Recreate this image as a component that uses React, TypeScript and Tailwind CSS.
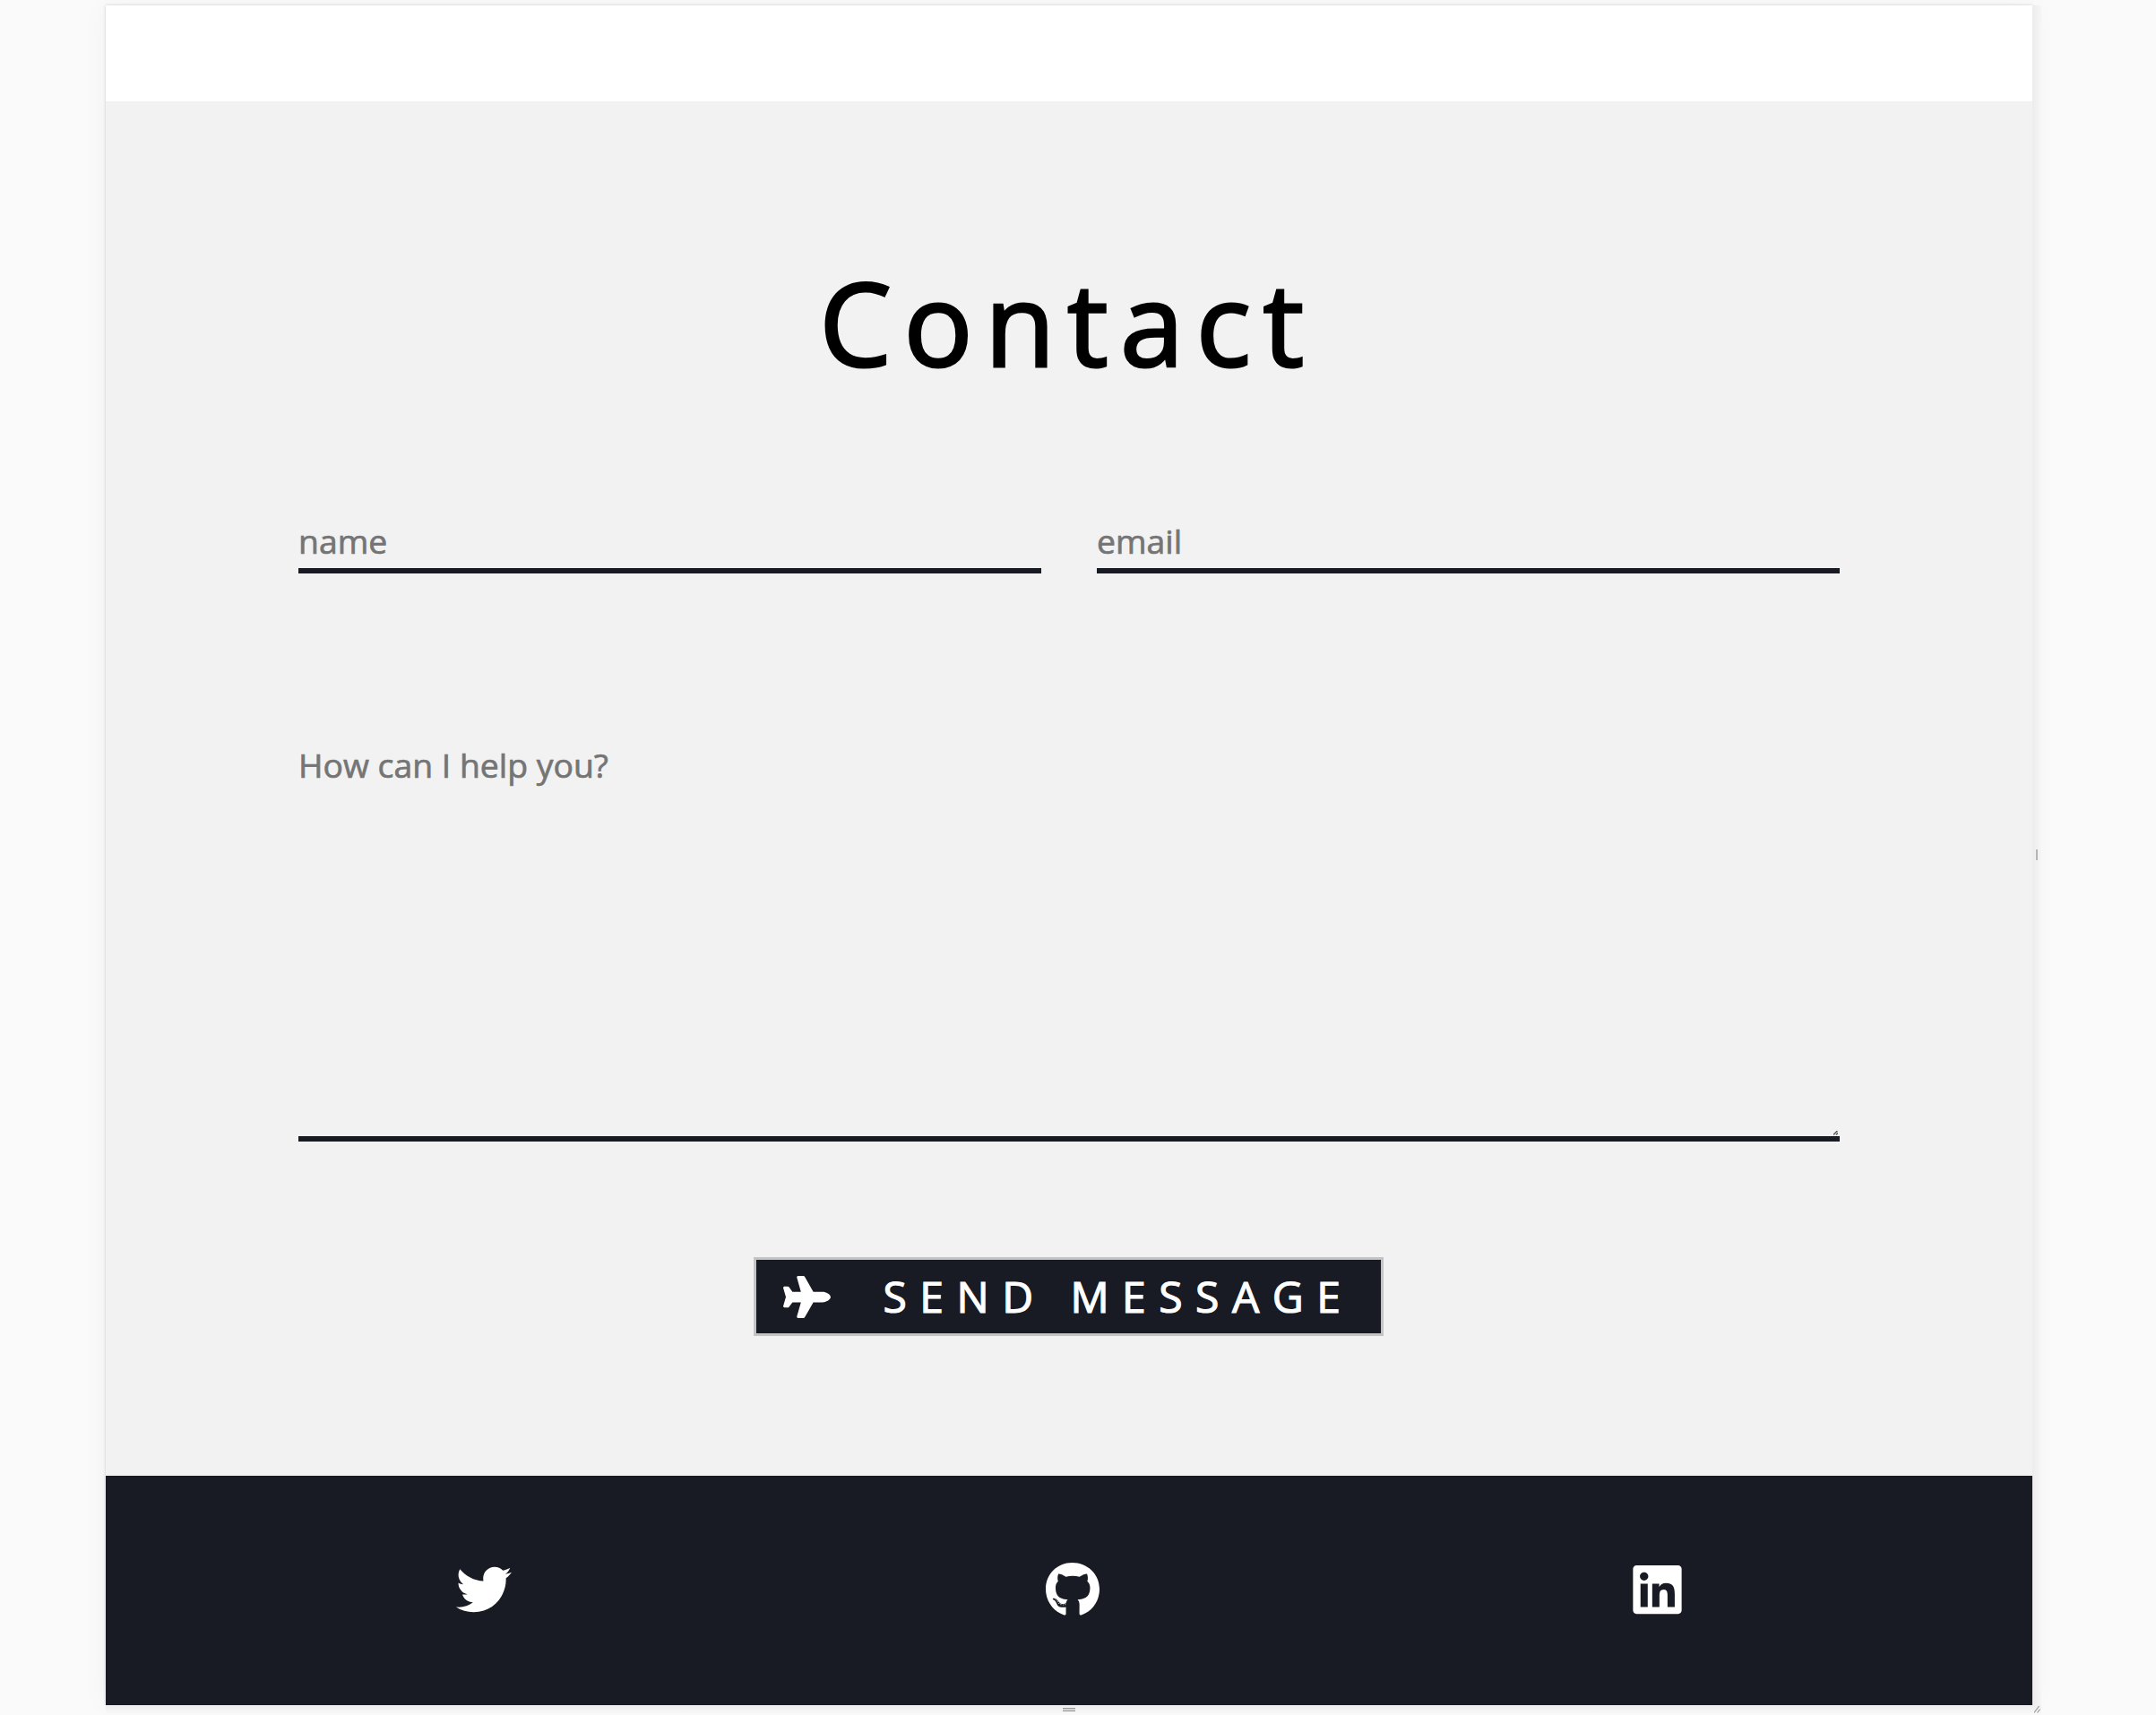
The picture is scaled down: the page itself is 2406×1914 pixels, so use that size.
import React from "react";
import { FaGithub, FaLinkedin, FaPlane, FaTwitter } from "react-icons/fa";

const fieldClass =
  "block w-full resize-none border-b-[6px] border-[#191b24] bg-transparent p-0 text-[37.33px] leading-[52px] text-[#757575] placeholder:text-[#757575] placeholder:opacity-100 outline-none [-webkit-text-stroke:0.7px_#757575]";

function ContactForm() {
  return (
    <section className="flex h-[1534px] flex-col items-center bg-[#f2f2f2] px-[215px] pt-[160px]">
      <h1 className="mr-[3px] text-[128px] leading-[174px] font-normal tracking-[13.5px] text-black [-webkit-text-stroke:3px_black]">
        Contact
      </h1>
      <form className="mt-[131px] flex w-full flex-col items-center">
        <div className="grid w-full grid-cols-2 gap-x-[62px]">
          <input className={`${fieldClass} h-[62px] pb-[6px]`} type="text" placeholder="name" />
          <input className={`${fieldClass} h-[62px] pb-[6px]`} type="email" placeholder="email" />
        </div>
        <div className="relative mt-[188px] w-full">
          <textarea className={`${fieldClass} h-[446px]`} placeholder="How can I help you?" />
          <svg className="absolute right-[2px] bottom-[7px] h-[5px] w-[5px]" viewBox="0 0 5 5">
            <path d="M0 4.5 4.5 0M3 4.5 5 2.5" stroke="#555" strokeWidth="1.4" fill="none" />
          </svg>
        </div>
        <button
          type="button"
          className="mt-[129px] mr-[2px] flex h-[88px] w-[703px] items-center border-[3px] border-[#c4c4c4] bg-[#191b24] pl-[30px] text-white"
        >
          <FaPlane className="h-[47px] w-[53px]" />
          <span className="ml-[59px] text-[48px] leading-none tracking-[14.5px] whitespace-nowrap [-webkit-text-stroke:1.2px_white]">
            SEND MESSAGE
          </span>
        </button>
      </form>
    </section>
  );
}

function Footer() {
  return (
    <footer className="flex h-[256px] items-center justify-between bg-[#191b24] pr-[391px] pb-[2px] pl-[391px] text-white">
      <FaTwitter className="h-[62px] w-[62px]" />
      <FaGithub className="h-[62px] w-[60px]" />
      <FaLinkedin className="h-[62px] w-[55px]" />
    </footer>
  );
}

export default function App() {
  return (
    <div className="h-[1914px] w-[2406px] overflow-hidden bg-[#fafafa] pt-[6px] pl-[118px] font-['Open_Sans',sans-serif]">
      <div className="relative w-[2150px] bg-white pt-[107px] shadow-[0_0_3px_rgba(0,0,0,0.18),0_0_30px_rgba(0,0,0,0.04)]">
        <ContactForm />
        <Footer />
        <div className="absolute top-0 left-full h-full w-[10px] bg-gradient-to-r from-[#ececec] to-[#f6f6f6]" />
        <div className="absolute top-[942px] left-[2154px] h-[12px] w-[2px] bg-[#b5b5b5]" />
        <div className="absolute top-full left-0 h-[11px] w-[2160px] bg-gradient-to-b from-[#eeeeee] to-[#f9f9f9]" />
        <div className="absolute top-[1900px] left-[1068px] h-[4px] w-[14px] border-y border-[#999] bg-[#d4d4d4]" />
        <svg className="absolute top-[1898px] left-[2152px] h-[8px] w-[7px]" viewBox="0 0 7 8">
          <path d="M0 7.5 5.5 0M3.5 7.5 6.5 3.5" stroke="#999" strokeWidth="1.2" fill="none" />
        </svg>
      </div>
    </div>
  );
}
